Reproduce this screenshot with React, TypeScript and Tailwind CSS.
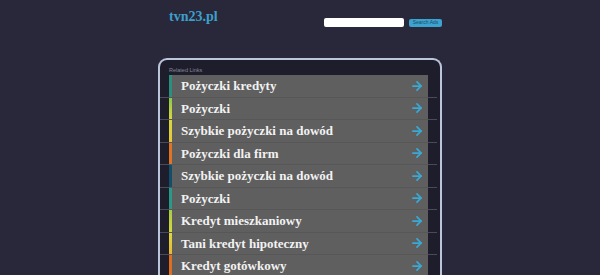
import { ArrowRight } from 'lucide-react'

const links = [
  { label: 'Pożyczki kredyty', bar: 'bg-[#2a8f7f]' },
  { label: 'Pożyczki', bar: 'bg-gradient-to-b from-[#8cc84a] to-[#d8d83a]' },
  { label: 'Szybkie pożyczki na dowód', bar: 'bg-gradient-to-b from-[#d8d83a] to-[#e8c838]' },
  { label: 'Pożyczki dla firm', bar: 'bg-[#e07424]' },
  { label: 'Szybkie pożyczki na dowód', bar: 'bg-[#124e6a]' },
  { label: 'Pożyczki', bar: 'bg-[#2a9a88]' },
  { label: 'Kredyt mieszkaniowy', bar: 'bg-gradient-to-b from-[#a8cc44] to-[#d6d83c]' },
  { label: 'Tani kredyt hipoteczny', bar: 'bg-gradient-to-b from-[#dcd83c] to-[#e8b834]' },
  { label: 'Kredyt gotówkowy', bar: 'bg-[#e06e20]' },
]

export default function App() {
  return (
    <div className="h-[275px] w-[600px] overflow-hidden bg-[#29283a]">
      <div className="mx-auto w-[284px]">
        <header className="flex h-[58px] items-start justify-between pl-[11px]">
          <h1
            className="mt-[8px] text-[14px] font-bold leading-[18px] text-[#3d9fca]"
            style={{ fontFamily: '"Liberation Serif", serif' }}
          >
            tvn23.pl
          </h1>
          <div className="mt-[18px] flex items-center gap-[5px]">
            <input className="h-[9px] w-[80px] rounded-[2px] bg-white" />
            <button
              className="flex h-[8px] w-[33px] items-center justify-center rounded-[2px] bg-[#3ca3d0] text-[5px] leading-none text-[#1b4a66]"
              style={{ fontFamily: '"Liberation Sans", sans-serif' }}
            >
              Search Ads
            </button>
          </div>
        </header>

        <section className="rounded-t-[9px] border-2 border-b-0 border-[#bcc6da] bg-[#1e1d2c] pt-[7px]">
          <p
            className="mb-[2px] pl-[9px] text-[5.5px] leading-[6px] text-[#85859a]"
            style={{ fontFamily: '"Liberation Sans", sans-serif' }}
          >
            Related Links
          </p>
          <ul>
            {links.map((link, i) => (
              <li key={i} className="flex h-[22.5px] items-stretch">
                <span className="mt-auto w-[9px] border-b border-[#4a4a58] pl-[2px]" />
                <a
                  className="flex flex-1 items-center border-b border-[#575757] bg-[#5f5f5f]"
                  style={{ fontFamily: '"Liberation Serif", serif' }}
                >
                  <span className={`h-full w-[3px] ${link.bar}`} />
                  <span className="flex-1 pl-[9px] text-[13px] font-bold text-[#f2f2f2]">{link.label}</span>
                  <ArrowRight className="mr-[4px] h-[14px] w-[14px] text-[#3aa9d4]" strokeWidth={3} />
                </a>
                <span className="mt-auto w-[9px] border-b border-[#4a4a58]" />
                <span className="w-[3px]" />
              </li>
            ))}
          </ul>
        </section>
      </div>
    </div>
  )
}
